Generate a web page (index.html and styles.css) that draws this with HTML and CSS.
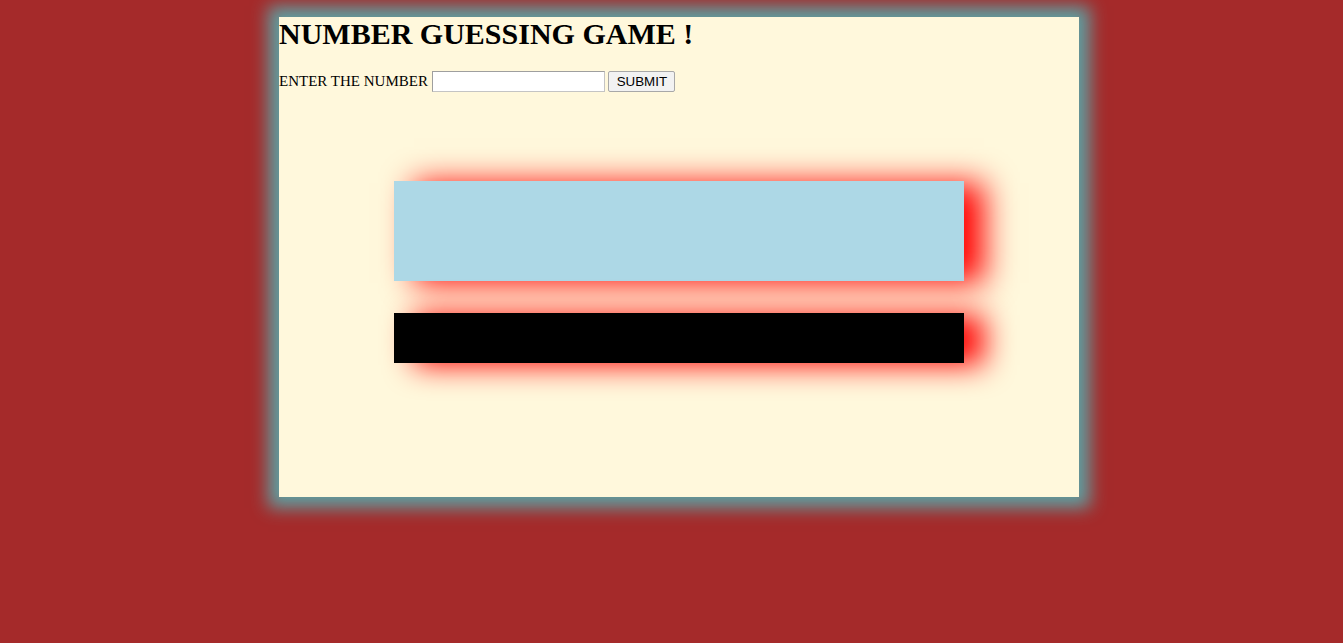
FILE: index.html
```html
<!DOCTYPE html>
<html>
<head>
<meta charset="utf-8">
<title>Number Guessing Game</title>
<link rel="stylesheet" href="styles.css">
</head>
<body>
<div class="container">
  <h1 class="title">NUMBER GUESSING GAME !</h1>
  <form class="guess-form" onsubmit="return false;">
    <label class="guess-label" for="guess">ENTER THE NUMBER</label>
    <input class="guess-input" type="text" id="guess">
    <button class="guess-btn" type="submit">SUBMIT</button>
  </form>
  <div class="result-box"></div>
  <div class="message-box"></div>
</div>
</body>
</html>
```
FILE: styles.css
```css
html {
  background: #a52a2a;
}
body {
  margin: 0;
  padding: 17px 0 0 15px;
  min-height: 643px;
  box-sizing: border-box;
  font-family: "Liberation Serif", "Times New Roman", serif;
  font-size: 15px;
}
.container {
  width: 800px;
  height: 480px;
  margin: 0 auto;
  background: #fff8dc;
  box-shadow: 0 0 16px 11px #5f9ea0;
  display: flow-root;
}
.title {
  margin: 0 0 20px;
  font-size: 30px;
  font-weight: bold;
  line-height: normal;
}
.guess-form {
  margin: 0;
}
.guess-input {
  font-family: "Liberation Sans", Arial, sans-serif;
  font-size: 13.33px;
  width: 173px;
  height: 21px;
  padding: 1px 2px;
  border: 1px solid #a9a9a9;
  border-color: #9f9f9f #c4c4c4 #c4c4c4 #9f9f9f;
  box-sizing: border-box;
  background: #fff;
  margin: 0;
}
.guess-btn {
  font-family: "Liberation Sans", Arial, sans-serif;
  font-size: 13.33px;
  width: 67px;
  height: 21px;
  padding: 1px 6px;
  border: 1px solid #a8a8a8;
  border-radius: 2px;
  background: #f2f2f2;
  color: #000;
  box-sizing: border-box;
  margin: 0;
}
.result-box {
  width: 570px;
  height: 100px;
  margin: 89px auto 0;
  background: #add8e6;
  box-shadow: 20px 2px 30px red;
}
.message-box {
  width: 570px;
  height: 50px;
  margin: 32px auto 0;
  background: #000;
  box-shadow: 20px 2px 30px red;
}
```
